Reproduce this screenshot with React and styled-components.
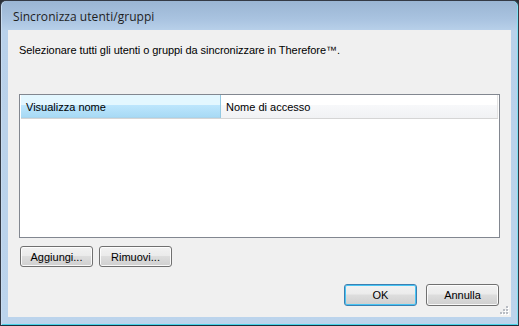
import styled, { createGlobalStyle } from 'styled-components';

const GlobalStyle = createGlobalStyle`
  html, body {
    margin: 0;
    padding: 0;
    background: #2b2f36;
  }
  #root {
    width: 519px;
    height: 326px;
  }
`;

const Window = styled.div`
  box-sizing: border-box;
  width: 519px;
  height: 326px;
  display: flex;
  flex-direction: column;
  border: 1px solid #343a45;
  border-bottom-color: #1d2f3d;
  border-radius: 6px 6px 0 0;
  background: linear-gradient(to bottom, #9ab5d3 0px, #a9c3e0 18px, #b9d1ea 30px, #bcd4ec 100%);
  box-shadow: inset 1px 0 0 #c9dcf0, inset -1px 0 0 #7fe0f2, inset 0 -1px 0 #49d3e8;
  overflow: hidden;
`;

const TitleBar = styled.div`
  height: 29px;
  display: flex;
  align-items: center;
  padding-left: 12px;
  padding-top: 1px;
  box-sizing: border-box;
  font-family: 'Open Sans', 'Noto Sans', sans-serif;
  font-size: 12px;
  color: #1e1e1e;
  letter-spacing: 0.05px;
`;

const Client = styled.div`
  position: relative;
  flex: 1;
  margin: 0 7px 8px 7px;
  background: #f0f0f0;
  display: flex;
  flex-direction: column;
  font-family: 'Liberation Sans', Arial, sans-serif;
  font-size: 11px;
  color: #000;
`;

const Label = styled.div`
  padding: 14px 11px 0;
  line-height: 13px;
  height: 13px;
  letter-spacing: -0.06px;
`;

const ListBox = styled.div`
  margin: 37px 11px 0;
  height: 144px;
  box-sizing: border-box;
  border: 1px solid #828790;
  background: #fff;
  padding: 0 1px;
`;

const HeaderRow = styled.div`
  display: flex;
  height: 23px;
  border-bottom: 1px solid #d5d5d5;
`;

const HeaderCell = styled.div`
  box-sizing: border-box;
  width: ${(p) => (p.$flex ? 'auto' : `${p.$width}px`)};
  flex: ${(p) => (p.$flex ? 1 : 'none')};
  display: flex;
  align-items: center;
  padding-left: ${(p) => p.$pad || 5}px;
  padding-top: 1px;
  border-right: 1px solid ${(p) => (p.$hot ? '#93c9e3' : '#e3e3e3')};
  background: ${(p) =>
    p.$hot
      ? 'linear-gradient(to bottom, #e3f7ff 0%, #e3f7ff 42%, #bde6fd 43%, #a6d9f4 100%)'
      : 'linear-gradient(to bottom, #ffffff 0%, #ffffff 42%, #f7f8fa 43%, #f1f2f4 100%)'};
  box-shadow: ${(p) => (p.$hot ? 'inset 0 -1px 0 #a9d3ea' : 'none')};
`;

const ButtonRow = styled.div`
  display: flex;
  gap: 6px;
  padding: 8px 0 0 12px;
`;

const FooterRow = styled.div`
  display: flex;
  justify-content: flex-end;
  gap: 9px;
  padding: 17px 12px 0 0;
`;

const Button = styled.button`
  box-sizing: border-box;
  width: 73px;
  height: ${(p) => (p.$tall ? 22 : 21)}px;
  padding: 0;
  border: 1px solid ${(p) => (p.$default ? '#3c7fb1' : '#707070')};
  border-radius: 3px;
  font-family: 'Liberation Sans', Arial, sans-serif;
  font-size: 11px;
  color: #000;
  background: linear-gradient(to bottom, #f2f2f2 0%, #ebebeb 45%, #dddddd 50%, #cfcfcf 100%);
  box-shadow: inset 0 0 0 1px ${(p) => (p.$default ? '#48c5f4' : 'rgba(255,255,255,0.85)')};
`;

const Grip = styled.svg`
  position: absolute;
  right: 2px;
  bottom: 2px;
`;

export default function App() {
  const dots = [
    [8, 0],
    [8, 3],
    [5, 3],
    [8, 6],
    [5, 6],
    [2, 6],
  ];
  return (
    <>
      <GlobalStyle />
      <Window>
        <TitleBar>Sincronizza utenti/gruppi</TitleBar>
        <Client>
          <Label>Selezionare tutti gli utenti o gruppi da sincronizzare in Therefore™.</Label>
          <ListBox>
            <HeaderRow>
              <HeaderCell $width={200} $hot>Visualizza nome</HeaderCell>
              <HeaderCell $flex>Nome di accesso</HeaderCell>
            </HeaderRow>
          </ListBox>
          <ButtonRow>
            <Button>Aggiungi...</Button>
            <Button>Rimuovi...</Button>
          </ButtonRow>
          <FooterRow>
            <Button $tall $default>OK</Button>
            <Button $tall>Annulla</Button>
          </FooterRow>
          <Grip width="11" height="9" viewBox="0 0 11 9">
            {dots.map(([x, y]) => (
              <g key={`${x}-${y}`}>
                <rect x={x + 1} y={y + 1} width="2" height="2" fill="#ffffff" />
                <rect x={x} y={y} width="2" height="2" fill="#b8bcc3" />
              </g>
            ))}
          </Grip>
        </Client>
      </Window>
    </>
  );
}
